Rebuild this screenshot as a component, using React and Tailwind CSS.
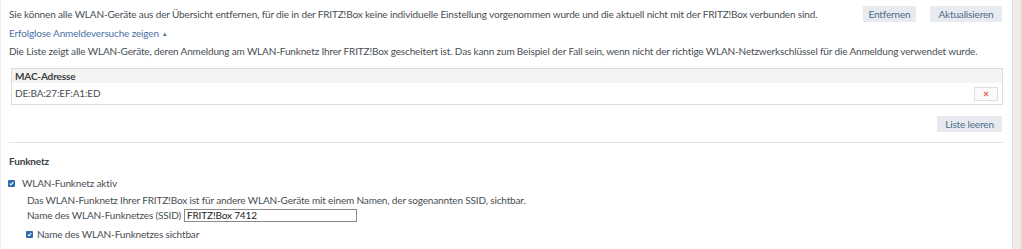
import React from "react";

const Check = () => (
  <span className="inline-flex w-[7px] h-[7px] bg-[#2f6bb3] items-center justify-center rounded-[1px] shrink-0">
    <svg width="5" height="5" viewBox="0 0 5 5">
      <path d="M0.8 2.6 L2 3.8 L4.3 1.2" stroke="white" strokeWidth="1.1" fill="none" />
    </svg>
  </span>
);

const Btn = ({ children, className = "" }) => (
  <button className={"h-[16px] bg-[#e7ebef] text-[#4d6a8a] text-[10px] leading-none whitespace-nowrap " + className}>
    {children}
  </button>
);

export default function App() {
  return (
    <div className="w-[1022px] h-[249px] flex bg-white overflow-hidden font-['Lato',sans-serif] text-[10px] text-[#474d53] tracking-[-0.15px]">
      <div className="w-[1012px] pl-[8px] pr-[9px] border-l border-[#eeeeee]">
        <div className="flex items-center justify-between h-[16px] mt-[6px]">
          <span>
            Sie können alle WLAN-Geräte aus der Übersicht entfernen, für die in der FRITZ!Box keine individuelle Einstellung vorgenommen wurde und die aktuell nicht mit der FRITZ!Box verbunden sind.
          </span>
          <div className="flex gap-[14px] mr-[1px]">
            <Btn className="w-[53px]">Entfernen</Btn>
            <Btn className="w-[72px]">Aktualisieren</Btn>
          </div>
        </div>
        <div className="h-[12px] mt-[5px] flex items-center text-[#4a72a6]">
          Erfolglose Anmeldeversuche zeigen <span className="ml-[3px] text-[6px]">▲</span>
        </div>
        <div className="h-[12px] mt-[6px] flex items-center">
          Die Liste zeigt alle WLAN-Geräte, deren Anmeldung am WLAN-Funknetz Ihrer FRITZ!Box gescheitert ist. Das kann zum Beispiel der Fall sein, wenn nicht der richtige WLAN-Netzwerkschlüssel für die Anmeldung verwendet wurde.
        </div>
        <div className="mt-[11px] ml-[2px] mr-0 border border-[#dcdcdc] h-[37px]">
          <div className="h-[14px] bg-[#f4f4f2] flex items-center pl-[3px] font-bold text-[#3b4045]">
            MAC-Adresse
          </div>
          <div className="h-[21px] flex items-center justify-between pl-[3px] pr-[4px]">
            <span>DE:BA:27:EF:A1:ED</span>
            <button className="w-[24px] h-[14px] border border-[#dedede] bg-[#fafafa] flex items-center justify-center">
              <svg width="6" height="6" viewBox="0 0 6 6">
                <path d="M1 1 L5 5 M5 1 L1 5" stroke="#e0705c" strokeWidth="1.1" />
              </svg>
            </button>
          </div>
        </div>
        <div className="flex justify-end mt-[11px]">
          <Btn className="w-[65px] mr-[1px]">Liste leeren</Btn>
        </div>
        <div className="mt-[10px] border-t border-[#e2e2e2]" />
        <div className="mt-[12px] h-[12px] flex items-center font-bold text-[#3b4045]">Funknetz</div>
        <div className="mt-[10px] h-[12px] flex items-center gap-[7px] -ml-[1px]">
          <Check />
          <span>WLAN-Funknetz aktiv</span>
        </div>
        <div className="pl-[18px]">
          <div className="mt-[5px] h-[12px] flex items-center">
            Das WLAN-Funknetz Ihrer FRITZ!Box ist für andere WLAN-Geräte mit einem Namen, der sogenannten SSID, sichtbar.
          </div>
          <div className="mt-[2px] h-[14px] flex items-center">
            <span className="w-[157px]">Name des WLAN-Funknetzes (SSID)</span>
            <input
              readOnly
              value="FRITZ!Box 7412"
              className="w-[173px] h-[13px] border border-[#8a8a8a] px-[2px] text-[10px] text-[#222] outline-none"
            />
          </div>
          <div className="mt-[6px] h-[12px] flex items-center gap-[4px] -ml-[1px]">
            <Check />
            <span>Name des WLAN-Funknetzes sichtbar</span>
          </div>
        </div>
      </div>
      <div className="w-[10px] h-full bg-[#f1eeea] border-l border-[#e2ded8] flex">
        <div className="ml-auto w-[2px] h-full bg-[#e6e2dc]" />
      </div>
    </div>
  );
}
